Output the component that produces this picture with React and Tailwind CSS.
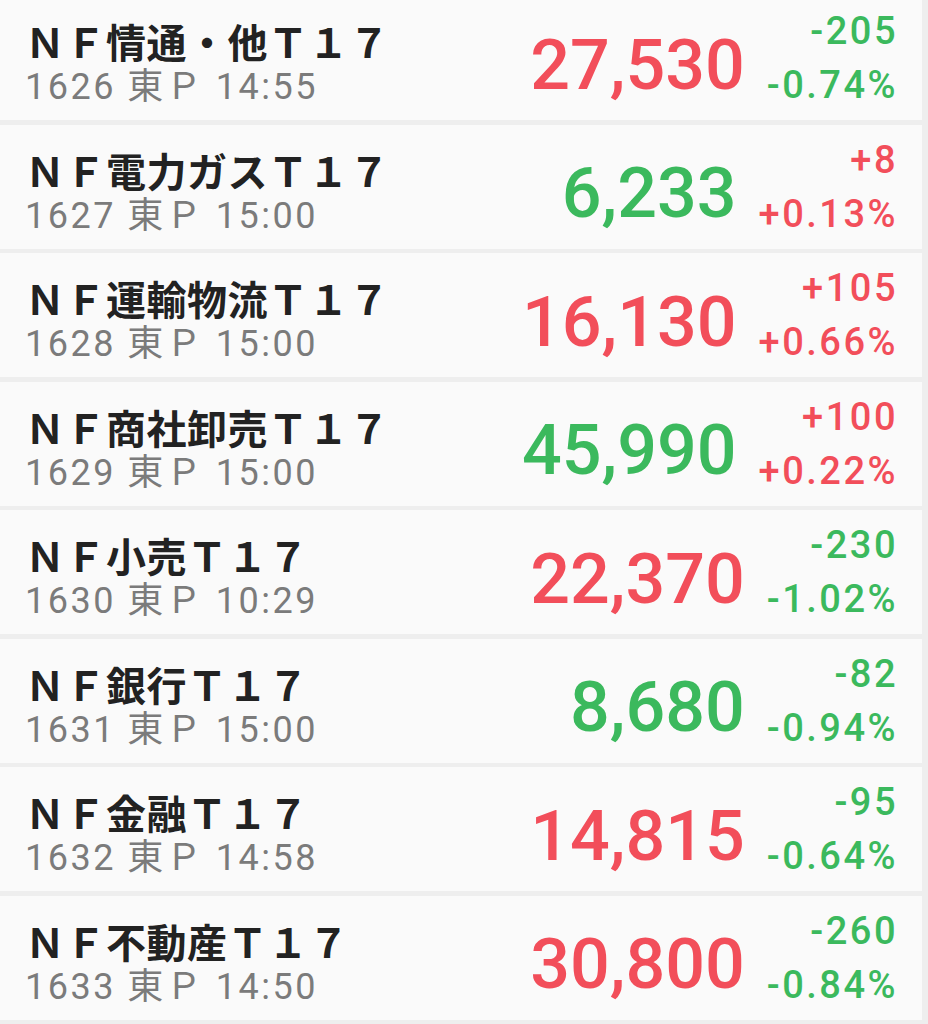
import React from "react";

const RED = "text-[#f24e5a]";
const GREEN = "text-[#3bb95d]";

const rows = [
    { name: "ＮＦ情通・他Ｔ１７", code: "1626", time: "14:55", price: "27,530", pUp: true, diff: "-205", pct: "-0.74%", up: false },
    { name: "ＮＦ電力ガスＴ１７", code: "1627", time: "15:00", price: "6,233", pUp: false, diff: "+8", pct: "+0.13%", up: true },
    { name: "ＮＦ運輸物流Ｔ１７", code: "1628", time: "15:00", price: "16,130", pUp: true, diff: "+105", pct: "+0.66%", up: true },
    { name: "ＮＦ商社卸売Ｔ１７", code: "1629", time: "15:00", price: "45,990", pUp: false, diff: "+100", pct: "+0.22%", up: true },
    { name: "ＮＦ小売Ｔ１７", code: "1630", time: "10:29", price: "22,370", pUp: true, diff: "-230", pct: "-1.02%", up: false },
    { name: "ＮＦ銀行Ｔ１７", code: "1631", time: "15:00", price: "8,680", pUp: false, diff: "-82", pct: "-0.94%", up: false },
    { name: "ＮＦ金融Ｔ１７", code: "1632", time: "14:58", price: "14,815", pUp: true, diff: "-95", pct: "-0.64%", up: false },
    { name: "ＮＦ不動産Ｔ１７", code: "1633", time: "14:50", price: "30,800", pUp: true, diff: "-260", pct: "-0.84%", up: false },
];

function QuoteRow({ row }) {
    return (
        <div className="flex h-[124px] items-center bg-[#fafafa] pl-[25px] pr-[24px]">
            {/* 銘柄名・コード */}
            <div className="flex flex-1 flex-col pt-[10px]">
                <div className="font-['Noto_Sans_CJK_JP',sans-serif] text-[40px] font-bold leading-[48px] tracking-[0.5px] text-[#222222]">
                    {row.name}
                </div>
                <div className="font-['Roboto','Noto_Sans_CJK_JP',sans-serif] text-[36px] leading-[44px] tracking-[2.5px] text-[#7b7b7b]">
                    {row.code} 東Ｐ {row.time}
                </div>
            </div>

            {/* 現在値 */}
            <div
                className={`pt-[13px] font-['Roboto',sans-serif] text-[70px] font-medium leading-none ${row.pUp ? RED : GREEN}`}
            >
                {row.price}
            </div>

            {/* 前日比 */}
            <div
                className={`ml-[22px] flex flex-col items-end font-['Roboto',sans-serif] text-[38px] font-medium leading-[54px] tracking-[2.5px] ${row.up ? RED : GREEN}`}
            >
                <span>{row.diff}</span>
                <span>{row.pct}</span>
            </div>
        </div>
    );
}

export default function App() {
    return (
        <div className="h-[1024px] w-[928px] overflow-hidden bg-[#eeeeee]">
            <div className="-mt-[4px] mr-[6px] flex flex-col gap-[4.5px]">
                {rows.map((row) => (
                    <QuoteRow key={row.code} row={row} />
                ))}
            </div>
        </div>
    );
}
